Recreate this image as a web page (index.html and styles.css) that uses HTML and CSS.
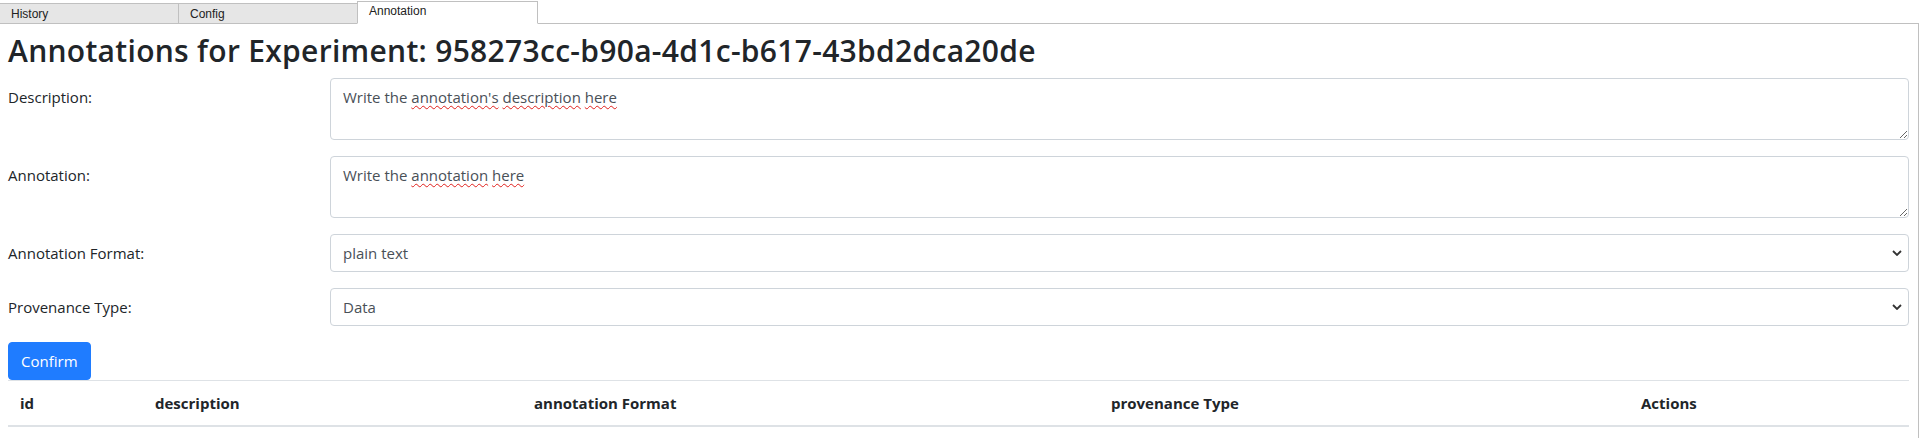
FILE: index.html
```html
<!DOCTYPE html>
<html lang="en">
<head>
<meta charset="utf-8">
<title>Annotations</title>
<link rel="stylesheet" href="styles.css">
</head>
<body>
<div class="tabbar">
  <div class="tab">History</div>
  <div class="tab">Config</div>
  <div class="tab active">Annotation</div>
  <div class="tab-fill"></div>
</div>
<div class="panel">
  <h2 class="title">Annotations for Experiment: 958273cc-b90a-4d1c-b617-43bd2dca20de</h2>

  <div class="form-row">
    <label class="col-label">Description:</label>
    <div class="textarea" contenteditable="true" spellcheck="false">Write the <span class="sp">annotation's</span> <span class="sp">description</span> <span class="sp">here</span></div>
  </div>

  <div class="form-row">
    <label class="col-label">Annotation:</label>
    <div class="textarea" contenteditable="true" spellcheck="false">Write the <span class="sp">annotation</span> <span class="sp">here</span></div>
  </div>

  <div class="form-row">
    <label class="col-label">Annotation Format:</label>
    <select class="select">
      <option>plain text</option>
    </select>
  </div>

  <div class="form-row">
    <label class="col-label">Provenance Type:</label>
    <select class="select">
      <option>Data</option>
    </select>
  </div>

  <button class="btn" type="button">Confirm</button>

  <table class="table">
    <colgroup>
      <col class="c-id"><col class="c-desc"><col class="c-fmt"><col class="c-prov"><col class="c-act">
    </colgroup>
    <thead>
      <tr>
        <th>id</th>
        <th>description</th>
        <th>annotation Format</th>
        <th>provenance Type</th>
        <th>Actions</th>
      </tr>
    </thead>
    <tbody></tbody>
  </table>
</div>
</body>
</html>
```

FILE: styles.css
```css
html, body {
  margin: 0;
  padding: 0;
  background: #fff;
}

body {
  font-family: "Open Sans", "Noto Sans", sans-serif;
  font-size: 15px;
  line-height: 24px;
  color: #212529;
}

/* ---------- tab bar ---------- */
.tabbar {
  display: flex;
  align-items: flex-end;
  height: 24px;
  font-family: "Liberation Sans", Arial, sans-serif;
  font-size: 12px;
  line-height: 16px;
  color: #222;
}

.tab {
  box-sizing: border-box;
  width: 179px;
  height: 21px;
  padding: 2px 10px 0 11px;
  background: #e6e6e6;
  border-top: 1px solid #c0c0c0;
  border-bottom: 1px solid #c0c0c0;
  border-right: 1px solid #c0c0c0;
}

.tab.active {
  width: 181px;
  height: 23px;
  margin-left: -1px;
  padding-top: 1px;
  background: #fff;
  border-left: 1px solid #c0c0c0;
  border-bottom-color: #fff;
}

.tab-fill {
  flex: 1;
  height: 1px;
  background: #c0c0c0;
}

/* ---------- panel ---------- */
.panel {
  box-sizing: border-box;
  width: 1919px;
  padding: 8px 9px 0 8px;
  border-right: 1px solid #c0c0c0;
  min-height: 414px;
}

.title {
  margin: 0 0 8px;
  font-size: 30px;
  font-weight: 600;
  line-height: 38px;
  color: #212529;
  letter-spacing: 0.3px;
}

.form-row {
  display: grid;
  grid-template-columns: 322px 1fr;
  margin-bottom: 16px;
}

.col-label {
  padding-top: 7px;
  line-height: 24px;
}

.textarea {
  box-sizing: border-box;
  height: 62px;
  padding: 6px 12px;
  border: 1px solid #ced4da;
  border-radius: 4px;
  color: #495057;
  resize: vertical;
  overflow: auto;
  outline: none;
}

.sp {
  text-decoration: underline wavy #e0201c;
  text-decoration-thickness: 1px;
  text-underline-offset: 2px;
}

.select {
  box-sizing: border-box;
  height: 38px;
  width: 100%;
  padding: 6px 30px 6px 12px;
  font: inherit;
  color: #495057;
  background: #fff url("data:image/svg+xml,%3Csvg xmlns='http://www.w3.org/2000/svg' width='10' height='6' viewBox='0 0 10 6'%3E%3Cpath d='M1 1l4 4 4-4' fill='none' stroke='%23333' stroke-width='1.8'/%3E%3C/svg%3E") no-repeat right 6px center / 10px 6px;
  border: 1px solid #ced4da;
  border-radius: 4px;
  appearance: none;
  -webkit-appearance: none;
}

.btn {
  display: block;
  box-sizing: border-box;
  height: 38px;
  margin: 0;
  padding: 6px 12px;
  font: inherit;
  font-size: 15px;
  line-height: 24px;
  color: #fff;
  background: #1f7cff;
  border: 1px solid #1f7cff;
  border-radius: 4px;
}

/* ---------- table ---------- */
.table {
  width: 100%;
  table-layout: fixed;
  border-collapse: collapse;
}

.c-id { width: 135px; }
.c-desc { width: 379px; }
.c-fmt { width: 577px; }
.c-prov { width: 530px; }
.c-act { width: 280px; }

.table th {
  padding: 10px 12px;
  text-align: left;
  font-weight: 700;
  line-height: 24px;
  border-top: 1px solid #dee2e6;
  border-bottom: 2px solid #dee2e6;
}
```
